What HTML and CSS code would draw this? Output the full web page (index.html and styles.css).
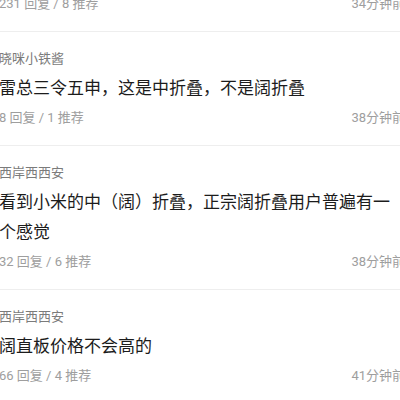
FILE: index.html
```html
<!DOCTYPE html>
<html lang="zh-CN">
<head>
    <meta charset="UTF-8">
    <meta name="viewport" content="width=device-width, initial-scale=1.0">
    <title>评论</title>
    <link rel="stylesheet" href="styles.css">
</head>
<body>
    <div class="comment-list">
        <!-- 上一条评论，只露出底部 -->
        <div class="comment comment-cut">
            <div class="comment-meta">
                <span>231 回复 / 8 推荐</span>
                <span class="time">34分钟前</span>
            </div>
        </div>

        <div class="comment">
            <div class="user">晓咪小铁酱</div>
            <p class="text">雷总三令五申，这是中折叠，不是阔折叠</p>
            <div class="comment-meta">
                <span>8 回复 / 1 推荐</span>
                <span class="time">38分钟前</span>
            </div>
        </div>

        <div class="comment">
            <div class="user">西岸西西安</div>
            <p class="text">看到小米的中（阔）折叠，正宗阔折叠用户普遍有一个感觉</p>
            <div class="comment-meta">
                <span>32 回复 / 6 推荐</span>
                <span class="time">38分钟前</span>
            </div>
        </div>

        <div class="comment">
            <div class="user">西岸西西安</div>
            <p class="text">阔直板价格不会高的</p>
            <div class="comment-meta">
                <span>66 回复 / 4 推荐</span>
                <span class="time">41分钟前</span>
            </div>
        </div>
    </div>
</body>
</html>
```

FILE: styles.css
```css
/* 基本设置 */
body {
    margin: 0;
    background: #fff;
    font-family: Roboto, "Noto Sans CJK SC", sans-serif;
    color: #222;
    overflow: hidden;
}

/* 评论列表比窗口略宽，左右两边被截掉一点 */
.comment-list {
    margin: 0 -5px 0 -1px;
}

.comment {
    padding: 17px 0;
    border-bottom: 1px solid #eeeeee;
}

.comment-cut {
    padding-top: 0;
    margin-top: -6px;
}

.user {
    font-size: 13px;
    line-height: 20px;
    color: #7b7b7b;
}

.text {
    margin: 4px 0 0;
    font-size: 17px;
    line-height: 30px;
    color: #1c1c1c;
}

.comment-meta {
    display: flex;
    justify-content: space-between;
    margin-top: 5px;
    font-size: 13px;
    line-height: 20px;
    color: #9e9e9e;
}

.comment-cut .comment-meta {
    margin-top: 0;
}
```
